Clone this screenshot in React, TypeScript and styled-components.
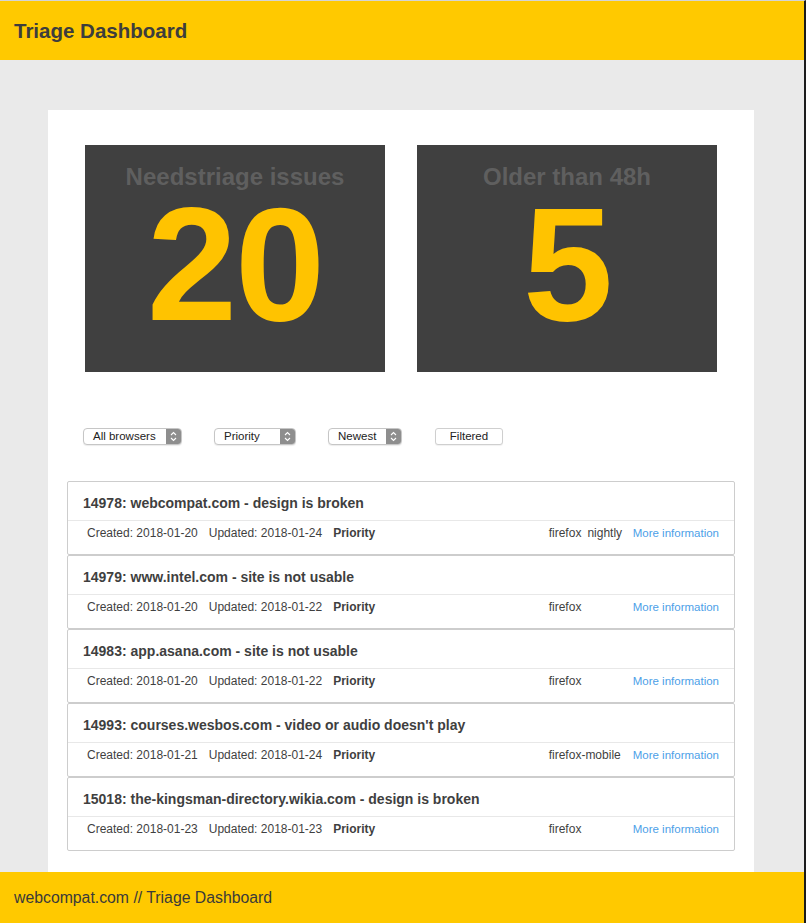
import React from "react"
import styled, { createGlobalStyle } from "styled-components"

const GlobalStyle = createGlobalStyle`
  html, body {
    margin: 0;
    padding: 0;
    background: #eaeaea;
  }
  body {
    font-family: "Liberation Sans", Arial, Helvetica, sans-serif;
    color: #3f3f3f;
  }
`

const Page = styled.div`
  display: flex;
  flex-direction: column;
  min-height: 923px;
  border-top: 1px solid #d4d4d4;
  border-right: 2px solid #1c1c1c;
  box-sizing: border-box;
  background: #eaeaea;
`

const Header = styled.header`
  display: flex;
  align-items: center;
  height: 59px;
  padding: 0 14px;
  background: #ffc900;
`

const HeaderTitle = styled.h1`
  margin: 0;
  font-size: 20.5px;
  font-weight: bold;
  color: #3d3d3d;
`

const Main = styled.main`
  flex: 1;
  padding: 50px 50px 0 48px;
  display: flex;
`

const Panel = styled.section`
  flex: 1;
  background: #fff;
  padding: 35px 19px 20px;
  display: flex;
  flex-direction: column;
`

const Stats = styled.div`
  display: flex;
  justify-content: center;
  gap: 32px;
`

const StatCard = styled.div`
  width: 300px;
  height: 227px;
  background: #404040;
  display: flex;
  flex-direction: column;
  align-items: center;
  padding-top: 16px;
  box-sizing: border-box;
`

const StatTitle = styled.div`
  font-size: 24px;
  line-height: 32px;
  font-weight: bold;
  color: #5f5f5f;
`

const StatNumber = styled.div`
  margin-top: 7px;
  font-size: 162px;
  line-height: 128px;
  font-weight: bold;
  color: #ffc300;
  letter-spacing: -2px;
`

const Filters = styled.div`
  display: flex;
  align-items: center;
  gap: 32px;
  margin: 56px 0 36px 16px;
`

const SelectBox = styled.div<{ $width: number }>`
  width: ${(p) => p.$width}px;
  height: 17px;
  box-sizing: border-box;
  display: flex;
  align-items: stretch;
  border: 1px solid #c6c6c6;
  border-radius: 4px;
  background: #fff;
  box-shadow: 0 1px 1px rgba(0, 0, 0, 0.08);
  overflow: hidden;
`

const SelectLabel = styled.span`
  flex: 1;
  padding-left: 9px;
  font-size: 11.5px;
  line-height: 15px;
  color: #222;
`

const SelectArrow = styled.span`
  width: 15px;
  background: #8e8e8e;
  display: flex;
  align-items: center;
  justify-content: center;
`

const FilterButton = styled.button`
  width: 68px;
  height: 17px;
  margin-left: 1px;
  padding: 0;
  border: 1px solid #cfcfcf;
  border-radius: 3px;
  background: #fff;
  font-family: inherit;
  font-size: 11.5px;
  line-height: 15px;
  color: #222;
  box-shadow: 0 1px 1px rgba(0, 0, 0, 0.06);
`

const IssueList = styled.ul`
  list-style: none;
  margin: 0;
  padding: 0;
`

const IssueItem = styled.li`
  border: 1px solid #cdcdcd;
  border-radius: 2px;
  background: #fff;
`

const IssueTitle = styled.div`
  padding: 12px 15px 8px;
  font-size: 14px;
  line-height: 18px;
  font-weight: bold;
  color: #3f3f3f;
  border-bottom: 1px solid #e8e8e8;
`

const IssueMeta = styled.div`
  display: flex;
  align-items: center;
  padding: 3px 15px 12px 19px;
  font-size: 12px;
  line-height: 18px;
  color: #3f3f3f;
`

const MetaText = styled.span<{ $bold?: boolean }>`
  margin-right: 11px;
  font-weight: ${(p) => (p.$bold ? "bold" : "normal")};
`

const Spacer = styled.span`
  flex: 1;
`

const Labels = styled.span`
  width: 84px;
  display: flex;
  gap: 6px;
`

const MoreLink = styled.a`
  font-size: 11.5px;
  color: #4d9fe8;
  text-decoration: none;
`

const Footer = styled.footer`
  display: flex;
  align-items: center;
  height: 51px;
  padding: 0 14px;
  background: #ffc900;
  font-size: 15.8px;
  color: #3a3a3a;
`

const Chevrons = () => (
  <svg width="7" height="11" viewBox="0 0 7 11" fill="none">
    <path d="M1 4 L3.5 1.5 L6 4" stroke="#fff" strokeWidth="1.1" />
    <path d="M1 7 L3.5 9.5 L6 7" stroke="#fff" strokeWidth="1.1" />
  </svg>
)

type Issue = {
  id: number
  title: string
  created: string
  updated: string
  labels: string[]
}

const issues: Issue[] = [
  { id: 14978, title: "webcompat.com - design is broken", created: "2018-01-20", updated: "2018-01-24", labels: ["firefox", "nightly"] },
  { id: 14979, title: "www.intel.com - site is not usable", created: "2018-01-20", updated: "2018-01-22", labels: ["firefox"] },
  { id: 14983, title: "app.asana.com - site is not usable", created: "2018-01-20", updated: "2018-01-22", labels: ["firefox"] },
  { id: 14993, title: "courses.wesbos.com - video or audio doesn't play", created: "2018-01-21", updated: "2018-01-24", labels: ["firefox-mobile"] },
  { id: 15018, title: "the-kingsman-directory.wikia.com - design is broken", created: "2018-01-23", updated: "2018-01-23", labels: ["firefox"] },
]

const selects = [
  { label: "All browsers", width: 99 },
  { label: "Priority", width: 82 },
  { label: "Newest", width: 74 },
]

export default function App() {
  return (
    <>
      <GlobalStyle />
      <Page>
        <Header>
          <HeaderTitle>Triage Dashboard</HeaderTitle>
        </Header>
        <Main>
          <Panel>
            <Stats>
              <StatCard>
                <StatTitle>Needstriage issues</StatTitle>
                <StatNumber>20</StatNumber>
              </StatCard>
              <StatCard>
                <StatTitle>Older than 48h</StatTitle>
                <StatNumber>5</StatNumber>
              </StatCard>
            </Stats>
            <Filters>
              {selects.map((s) => (
                <SelectBox key={s.label} $width={s.width}>
                  <SelectLabel>{s.label}</SelectLabel>
                  <SelectArrow>
                    <Chevrons />
                  </SelectArrow>
                </SelectBox>
              ))}
              <FilterButton>Filtered</FilterButton>
            </Filters>
            <IssueList>
              {issues.map((issue) => (
                <IssueItem key={issue.id}>
                  <IssueTitle>
                    {issue.id}: {issue.title}
                  </IssueTitle>
                  <IssueMeta>
                    <MetaText>Created: {issue.created}</MetaText>
                    <MetaText>Updated: {issue.updated}</MetaText>
                    <MetaText $bold>Priority</MetaText>
                    <Spacer />
                    <Labels>
                      {issue.labels.map((l) => (
                        <span key={l}>{l}</span>
                      ))}
                    </Labels>
                    <MoreLink href="#">More information</MoreLink>
                  </IssueMeta>
                </IssueItem>
              ))}
            </IssueList>
          </Panel>
        </Main>
        <Footer>webcompat.com // Triage Dashboard</Footer>
      </Page>
    </>
  )
}
